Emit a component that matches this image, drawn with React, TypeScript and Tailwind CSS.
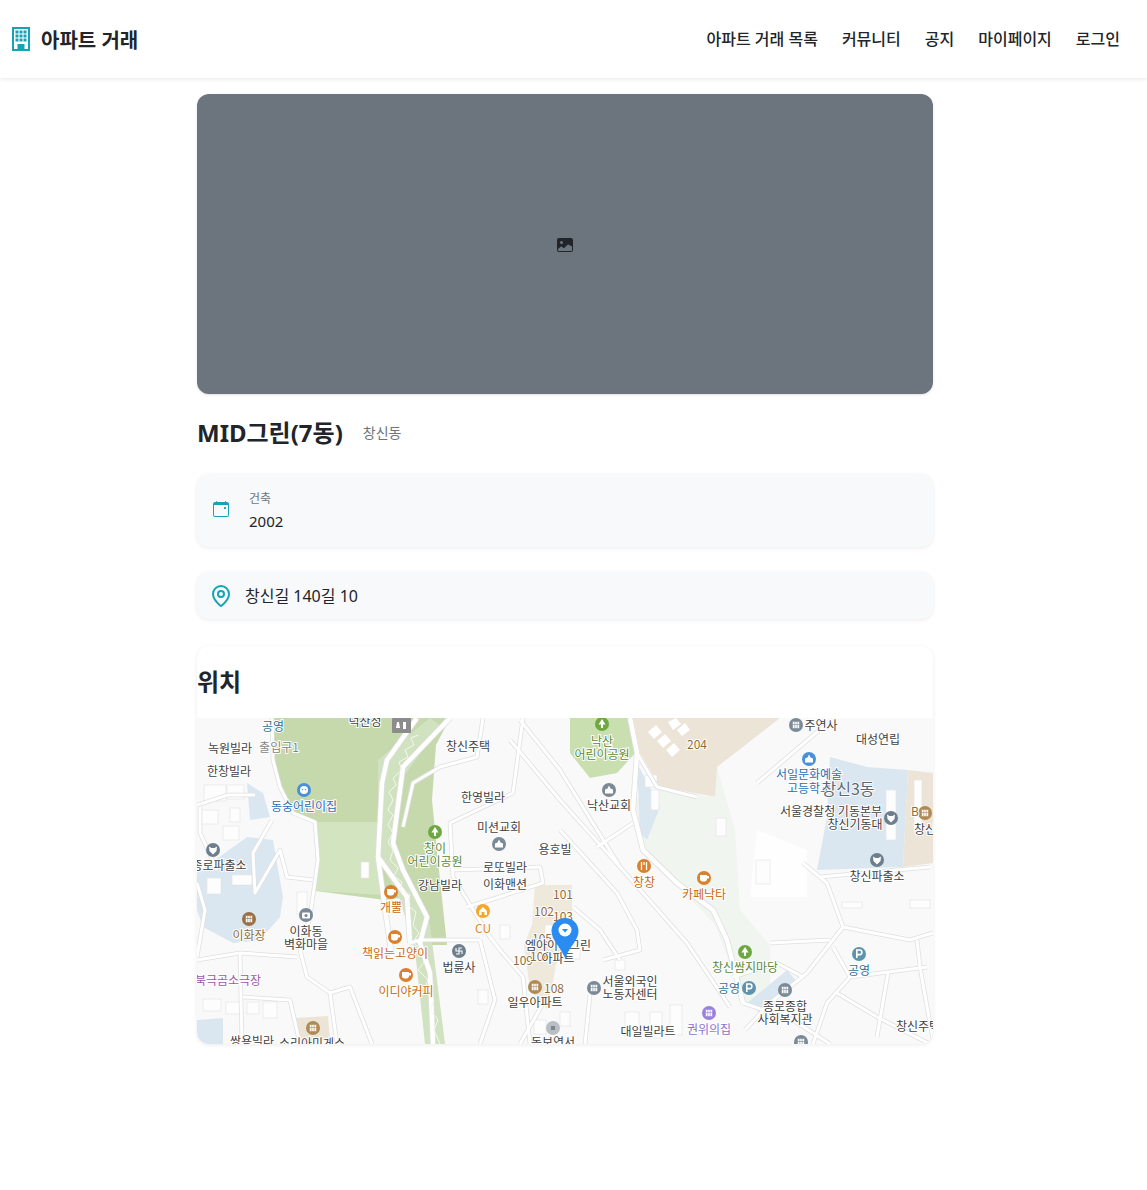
import { BsCalendarEvent, BsImageFill } from 'react-icons/bs';
import { MapPin } from 'lucide-react';

const navItems = ['아파트 거래 목록', '커뮤니티', '공지', '마이페이지', '로그인'];

// map drawing uses page coordinates through the viewBox
const areas: { d: string; fill: string }[] = [
  { d: 'M272 718L450 718L436 745L432 800L440 880L447 945L424 945L407 897L385 900L316 891L318 860L315 822L293 813L280 787L273 760Z', fill: '#c5d9ad' },
  { d: 'M316 822L380 822L384 895L316 891Z', fill: '#d3e4c1' },
  { d: 'M378 760L430 718L440 725L405 775L395 850L430 925L445 1044L425 1044L415 950L400 900L378 857Z', fill: '#d0e2c0' },
  { d: 'M570 718L630 718L638 750L617 773L590 778L570 753Z', fill: '#c9dfb0' },
  { d: 'M633 718L780 718L717 767L717 797L660 787L640 753Z', fill: '#ece4d6' },
  { d: 'M717 767L735 830L740 910L770 945L770 1000L745 1003L715 925L670 877L640 850L633 800L660 790L715 797Z', fill: '#f0f5f0' },
  { d: 'M757 830L807 850L807 897L750 897Z', fill: '#fefefe' },
  { d: 'M830 757L867 767L908 770L903 867L817 870L827 817Z', fill: '#dbe7f0' },
  { d: 'M908 770L933 773L933 863L903 867Z', fill: '#ece4d6' },
  { d: 'M197 873L247 837L273 840L283 897L280 917L260 940L233 943L203 927L197 910Z', fill: '#dbe7f0' },
  { d: 'M637 763L660 807L647 840L640 833Z', fill: '#dbe7f0' },
  { d: 'M197 1020L223 1018L223 1044L197 1044Z', fill: '#dbe7f0' },
  { d: 'M747 1003L787 970L798 983L760 1013Z', fill: '#dbe7f0' },
  { d: 'M247 783L263 793L270 817L250 820Z', fill: '#dbe7f0' },
  { d: 'M295 1018L328 1016L330 1040L300 1044Z', fill: '#ece4d6' },
  { d: 'M535 885L572 885L572 925L556 965L548 1010L530 990L524 945L532 925Z', fill: '#efe9dc' },
  { d: 'M648 732L656 725L662 732L654 739ZM657 741L665 734L671 741L663 748ZM666 750L674 743L680 750L672 757ZM668 722L676 718L681 724L673 730ZM677 730L685 723L690 730L682 736Z', fill: '#ffffff' },
];

const blocks = [
  [204, 785, 22, 16], [227, 785, 17, 14], [200, 810, 18, 14], [230, 808, 10, 14], [223, 826, 16, 14],
  [207, 878, 14, 16], [232, 875, 20, 10], [361, 862, 8, 16], [297, 892, 10, 22], [203, 999, 18, 12],
  [226, 1002, 14, 12], [247, 1002, 12, 12], [263, 1002, 14, 16], [651, 790, 8, 20], [645, 775, 12, 12],
  [716, 818, 10, 18], [756, 860, 14, 24], [886, 790, 10, 50], [914, 780, 8, 50], [910, 900, 20, 8],
  [842, 902, 20, 6], [545, 925, 14, 12], [570, 945, 10, 14], [615, 960, 10, 10], [625, 1012, 14, 24],
  [650, 1012, 12, 26], [670, 1005, 12, 30], [560, 1012, 10, 14], [534, 1020, 12, 14], [500, 925, 10, 14],
  [478, 990, 10, 14],
];

const mainRoads: string[] = [
  'M417 718L387 760L382 783L378 857L387 923L392 957',
  'M450 718L403 767L393 843L403 870L427 917L420 943L430 973L433 1044',
  'M378 857L407 897L410 943',
  'M630 718L637 753L633 810L643 850L677 883L713 910L727 940L743 1003',
];

const roads: string[] = [
  'M272 718L273 760L280 787L293 813L315 822L318 860L310 917L300 950L307 977L330 993L337 1044',
  'M410 943L420 940L480 940',
  'M483 718L477 757L440 767L413 783L403 827',
  'M523 718L513 793L450 823L453 877L490 937L500 950L523 977L530 1044',
  'M453 870L540 867L543 883L490 900L467 907',
  'M197 960L240 953L297 957',
  'M240 953L242 1044',
  'M243 997L290 1000L300 1044',
  'M330 993L350 987L372 1044',
  'M272 820L253 853L255 893L280 850L287 877L313 880',
  'M200 807L200 833L217 870',
  'M197 883L205 910L197 957',
  'M197 805L228 795L255 795',
  'M743 1003L793 1020L830 1044',
  'M637 753L657 787L697 797',
  'M520 720L560 770L620 867L687 943L730 1007',
  'M510 740L560 800L620 867',
  'M560 830L617 893L637 930L640 950L603 960',
  'M597 847L633 823',
  'M803 863L827 883L843 927L807 973L770 1003L745 1030',
  'M820 877L930 867',
  'M843 927L910 940L933 933',
  'M770 943L830 940',
  'M833 947L850 977L927 967',
  'M917 940L920 967L933 1040',
  'M850 977L827 1003L813 1044',
  'M888 973L877 1037',
  'M837 993L877 1017L930 1044',
  'M757 783L823 727',
  'M733 977L777 963L803 977',
  'M573 907L600 930L620 960',
  'M480 940L495 1000L480 1044',
  'M545 1000L520 1044',
  'M590 995L585 1044',
];

const trail =
  'M418 735L411 738L414 745L405 750L408 757L399 762L402 770L393 778L396 785L389 792L393 800L388 810L393 815L388 825L393 833L388 842L393 850L390 860L398 868L394 876L402 882L400 890L410 895L407 905L416 912L413 925L419 933L413 942L421 950L424 962L418 970L428 980L424 990L434 1000L430 1010L438 1020L434 1030L440 1044';

type Label = [string, number, number, string];

const dark = '#3f3f3f';
const labels: Label[] = [
  ['공영', 273, 726, '#37708f'], ['덕산정', 365, 721, dark], ['녹원빌라', 230, 748, dark], ['출입구1', 279, 747, '#858585'],
  ['한창빌라', 229, 771, dark], ['동숭어린이집', 304, 806, '#2a6fb5'], ['창신주택', 468, 746, dark], ['한영빌라', 483, 797, dark],
  ['미션교회', 499, 827, dark], ['창이', 435, 848, '#5a8a3a'], ['어린이공원', 435, 861, '#5a8a3a'], ['용호빌', 555, 849, dark],
  ['로또빌라', 505, 867, dark], ['이화맨션', 505, 884, dark], ['강남빌라', 440, 885, dark], ['종로파출소', 219, 865, dark],
  ['개뿔', 391, 907, '#c9690f'], ['CU', 483, 928, '#e08a1c'], ['책읽는고양이', 395, 953, '#c9690f'], ['법륜사', 459, 967, dark],
  ['이디야커피', 406, 991, '#c9690f'], ['이화장', 249, 935, '#8f6a3c'], ['이화동', 306, 931, dark], ['벽화마을', 306, 944, dark],
  ['북극곰소극장', 228, 980, '#9a59a8'], ['쌍용빌라', 252, 1041, dark], ['소리아미게스', 312, 1043, dark], ['일우아파트', 535, 1002, '#4a3a2a'],
  ['108', 554, 988, '#8f6a3c'], ['101', 563, 894, '#8f6a3c'], ['102', 544, 911, '#8f6a3c'], ['103', 563, 916, '#8f6a3c'],
  ['105', 542, 938, '#8f6a3c'], ['109', 523, 960, '#8f6a3c'], ['106', 540, 956, '#8f6a3c'], ['엠아이디그린', 558, 945, dark],
  ['아파트', 558, 958, dark], ['동보연서', 553, 1042, dark], ['서울외국인', 630, 981, dark], ['노동자센터', 630, 994, dark],
  ['대일빌라트', 648, 1031, dark], ['권위의집', 709, 1029, '#8a70cf'], ['공영', 729, 988, '#37708f'], ['창신쌈지마당', 745, 967, '#5a8a3a'],
  ['종로종합', 785, 1006, dark], ['사회복지관', 785, 1019, dark], ['공영', 859, 970, '#37708f'], ['창신주택', 918, 1026, dark],
  ['창창', 644, 882, '#c9690f'], ['카페낙타', 704, 894, '#c9690f'], ['낙산', 602, 741, '#5a8a3a'], ['어린이공원', 602, 754, '#5a8a3a'],
  ['낙산교회', 609, 805, dark], ['204', 697, 744, '#8f6a3c'], ['주연사', 821, 725, dark], ['대성연립', 878, 739, dark],
  ['서일문화예술', 809, 774, '#2a6fb5'], ['고등학교', 809, 788, '#2a6fb5'], ['서울경찰청 기동본부', 831, 811, dark],
  ['창신기동대', 855, 824, dark], ['B', 915, 811, '#8f6a3c'], ['창신', 925, 829, dark], ['창신파출소', 877, 876, dark],
];

type Poi = [number, number, string, 'tree' | 'cup' | 'cop' | 'grid' | 'church' | 'p' | 'fork' | 'face' | 'temple' | 'camera' | 'shop' | 'dot'];

const pois: Poi[] = [
  [304, 790, '#4a90d9', 'face'], [435, 832, '#6fa842', 'tree'], [499, 844, '#7a8a96', 'church'], [213, 850, '#6d7f8c', 'cop'],
  [391, 892, '#d9812c', 'cup'], [483, 911, '#f5a72c', 'shop'], [395, 937, '#d9812c', 'cup'], [459, 951, '#6d7f8c', 'temple'],
  [406, 975, '#d9812c', 'cup'], [249, 919, '#9a6f45', 'grid'], [306, 915, '#7a8a96', 'camera'], [313, 1028, '#b08a55', 'grid'],
  [535, 987, '#b08a55', 'grid'], [553, 1028, '#b9bec3', 'dot'], [594, 988, '#7a8a96', 'grid'], [709, 1013, '#9a82dc', 'grid'],
  [749, 988, '#5f93ad', 'p'], [745, 952, '#6fa842', 'tree'], [785, 990, '#7a8a96', 'grid'], [859, 954, '#5f93ad', 'p'],
  [801, 1042, '#7a8a96', 'grid'], [644, 866, '#d9812c', 'fork'], [704, 878, '#d9812c', 'cup'], [602, 724, '#6fa842', 'tree'],
  [609, 790, '#7a8a96', 'church'], [796, 725, '#7a8a96', 'grid'], [809, 759, '#4a90d9', 'church'], [891, 818, '#6d7f8c', 'cop'],
  [925, 813, '#b08a55', 'grid'], [877, 860, '#6d7f8c', 'cop'],
];

function PoiIcon({ poi }: { poi: Poi }) {
  const [x, y, color, kind] = poi;
  return (
    <g transform={`translate(${x} ${y})`}>
      <circle r={7} fill={color} />
      {kind === 'tree' && <path d="M0 -5L3.5 0.5H1V4H-1V0.5H-3.5Z" fill="#fff" />}
      {kind === 'cup' && <path d="M-4 -3H3V1C3 3 1.5 3.5 -0.5 3.5C-2.5 3.5 -4 3 -4 1ZM3 -2H5V0.5H3Z" fill="#fff" />}
      {kind === 'cop' && <path d="M-4 -3.5L-1.5 -2H1.5L4 -3.5L3.5 1L0 4.5L-3.5 1Z" fill="#fff" />}
      {kind === 'grid' && <path d="M-3.5 -3.5H3.5V3.5H-3.5ZM-1.2 -3.5V3.5M1.2 -3.5V3.5M-3.5 -0.5H3.5" fill="#fff" stroke={color} strokeWidth={0.6} />}
      {kind === 'church' && <path d="M0 -4.5L1.5 -1.5L4 -0.5V3.5H-4V-0.5L-1.5 -1.5Z" fill="#fff" />}
      {kind === 'p' && <path d="M-2.2 4V-4H0.8C3.6 -4 3.6 0.6 0.8 0.6H-2.2" fill="none" stroke="#fff" strokeWidth={1.6} />}
      {kind === 'fork' && <path d="M-2.5 -4V4M0 -4V-1M2.5 -4V4" fill="none" stroke="#fff" strokeWidth={1.3} />}
      {kind === 'face' && (
        <>
          <circle r={4} fill="#fff" />
          <circle cx={-1.5} cy={-0.5} r={0.7} fill={color} />
          <circle cx={1.5} cy={-0.5} r={0.7} fill={color} />
        </>
      )}
      {kind === 'temple' && <path d="M-3 -3V0H3V3M3 -3H0V3H-3" fill="none" stroke="#fff" strokeWidth={1.1} />}
      {kind === 'camera' && (
        <>
          <rect x={-4} y={-2.5} width={8} height={6} rx={1} fill="#fff" />
          <circle cy={0.5} r={1.6} fill={color} />
        </>
      )}
      {kind === 'shop' && <path d="M-4 0L0 -4L4 0V4H1.5V1H-1.5V4H-4Z" fill="#fff" />}
      {kind === 'dot' && <rect x={-2} y={-2} width={4} height={4} fill="#7d858c" />}
    </g>
  );
}

function MapView() {
  return (
    <svg
      viewBox="197 718 736 326"
      className="block w-full h-[326px] bg-[#f9f9f9] rounded-b-xl"
      style={{ fontFamily: '"Noto Sans CJK KR", sans-serif' }}
    >
      {areas.map((a) => (
        <path key={a.d} d={a.d} fill={a.fill} />
      ))}
      {blocks.map(([x, y, w, h]) => (
        <rect key={`${x}-${y}`} x={x} y={y} width={w} height={h} fill="#fdfdfd" stroke="#e6e6e6" strokeWidth={0.7} />
      ))}
      {roads.map((d) => (
        <path key={d} d={d} fill="none" stroke="#dfdfdf" strokeWidth={4.5} strokeLinejoin="round" />
      ))}
      {mainRoads.map((d) => (
        <path key={d} d={d} fill="none" stroke="#dfdfdf" strokeWidth={6} strokeLinejoin="round" />
      ))}
      {roads.map((d) => (
        <path key={`${d}-fill`} d={d} fill="none" stroke="#ffffff" strokeWidth={3} strokeLinejoin="round" />
      ))}
      {mainRoads.map((d) => (
        <path key={`${d}-fill`} d={d} fill="none" stroke="#ffffff" strokeWidth={4.5} strokeLinejoin="round" />
      ))}
      <path d={trail} fill="none" stroke="#f4f8ef" strokeWidth={1} strokeLinejoin="round" />
      <rect x={392} y={718} width={19} height={15} rx={1} fill="#8c8c8c" />
      <path d="M397 722h2l1 6h-4ZM403 722h3v7h-3Z" fill="#fff" />
      {pois.map((p) => (
        <PoiIcon key={`${p[0]}-${p[1]}`} poi={p} />
      ))}
      {labels.map(([text, x, y, color]) => (
        <text
          key={`${text}-${x}-${y}`}
          x={x}
          y={y + 4.5}
          textAnchor="middle"
          fontSize={12}
          fill={color}
          stroke="#ffffff"
          strokeWidth={2}
          paintOrder="stroke"
        >
          {text}
        </text>
      ))}
      <text x={848} y={795} textAnchor="middle" fontSize={16} fill="#5a6670" stroke="#ffffff" strokeWidth={1.5} paintOrder="stroke">
        창신3동
      </text>
      <path d="M565 918C557 918 551.500 924 551.500 931C551.500 940 560 946 565 958C570 946 578.500 940 578.500 931C578.500 924 573 918 565 918Z" fill="#2a8cf0" />
      <circle cx={565} cy={930} r={6.500} fill="#fff" />
      <path d="M562 929H568L565 932.500Z" fill="#2a8cf0" />
    </svg>
  );
}

export default function App() {
  return (
    <div className="min-h-[1190px] bg-white text-[#212529] font-['Noto_Sans','Noto_Sans_CJK_KR',sans-serif]">
      <header className="h-[78px] flex items-center justify-between pl-3 pr-[27px] bg-white shadow-[0_1px_4px_rgba(0,0,0,0.1)]">
        <div className="flex items-center gap-[11px]">
          <svg width="18" height="24" viewBox="0 0 18 24" className="text-[#17a2b8]">
            <rect x="1" y="1" width="16" height="22" fill="none" stroke="currentColor" strokeWidth="2" />
            {[4, 8, 12].map((y) =>
              [4, 8, 12].map((x) => <rect key={`${x}-${y}`} x={x - 0.5} y={y - 0.5} width="3" height="3" fill="currentColor" />),
            )}
            <rect x="5.500" y="17" width="7" height="6" fill="currentColor" />
          </svg>
          <span className="pt-1 text-xl font-bold">아파트 거래</span>
        </div>
        <nav className="flex items-center gap-6">
          {navItems.map((item) => (
            <a key={item} className="text-base font-medium">
              {item}
            </a>
          ))}
        </nav>
      </header>

      <main className="w-[736px] ml-[197px] pt-4">
        <div className="h-[300px] rounded-xl bg-[#6c757d] shadow-sm flex items-center justify-center">
          <BsImageFill className="mt-0.5 w-4 h-4 text-[#212529]" />
        </div>

        <div className="flex items-center gap-5 mt-[21px] h-9">
          <h1 className="text-2xl font-bold">MID그린(7동)</h1>
          <span className="text-sm text-[#6c757d]">창신동</span>
        </div>

        <div className="flex items-center gap-5 mt-[23px] h-[73px] px-4 rounded-xl bg-[#f8f9fa] shadow-[0_1px_4px_rgba(0,0,0,0.08)]">
          <BsCalendarEvent className="-mt-[3px] w-4 h-4 text-[#17a2b8]" />
          <div className="flex flex-col">
            <span className="text-xs leading-5 text-[#6c757d]">건축</span>
            <span className="text-[15px] leading-6 font-normal">2002</span>
          </div>
        </div>

        <div className="flex items-center gap-3 mt-[25px] h-[47px] pl-3 rounded-xl bg-[#f8f9fa] shadow-[0_1px_4px_rgba(0,0,0,0.08)]">
          <MapPin className="w-6 h-6 text-[#17a2b8]" />
          <span className="text-base">창신길 140길 10</span>
        </div>

        <section className="mt-[27px] rounded-xl bg-white shadow-[0_1px_4px_rgba(0,0,0,0.08)]">
          <h2 className="h-[72px] flex items-center text-2xl font-bold">위치</h2>
          <MapView />
        </section>
      </main>
    </div>
  );
}
